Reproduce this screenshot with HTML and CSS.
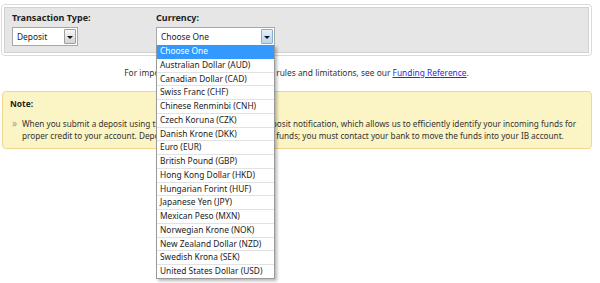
FILE: index.html
```html
<!DOCTYPE html>
<html>
<head>
<meta charset="utf-8">
<link rel="stylesheet" href="styles.css">
</head>
<body>
<div class="page">
  <div class="panel">
    <div class="panel-inner">
      <div class="field field-type">
        <div class="label">Transaction Type:</div>
        <div class="select select-type">
          <span class="value">Deposit</span>
          <span class="btn"><i class="arrow"></i></span>
        </div>
      </div>
      <div class="field field-currency">
        <div class="label">Currency:</div>
        <div class="select select-currency">
          <span class="value">Choose One</span>
          <span class="btn btn-focus"><i class="arrow"></i></span>
          <ul class="options">
            <li class="selected">Choose One</li>
            <li>Australian Dollar (AUD)</li>
            <li>Canadian Dollar (CAD)</li>
            <li>Swiss Franc (CHF)</li>
            <li>Chinese Renminbi (CNH)</li>
            <li>Czech Koruna (CZK)</li>
            <li>Danish Krone (DKK)</li>
            <li>Euro (EUR)</li>
            <li>British Pound (GBP)</li>
            <li>Hong Kong Dollar (HKD)</li>
            <li>Hungarian Forint (HUF)</li>
            <li>Japanese Yen (JPY)</li>
            <li>Mexican Peso (MXN)</li>
            <li>Norwegian Krone (NOK)</li>
            <li>New Zealand Dollar (NZD)</li>
            <li>Swedish Krona (SEK)</li>
            <li>United States Dollar (USD)</li>
          </ul>
        </div>
      </div>
    </div>
  </div>

  <p class="info">For important information concerning rules and limitations, see our <a href="#">Funding Reference</a>.</p>

  <div class="note">
    <div class="note-title">Note:</div>
    <div class="note-item">
      <span class="bullet">»</span>
      <p class="note-text">When you submit a deposit using this form, we'll now create a deposit notification, which allows us to efficiently identify your incoming funds for proper credit to your account. Deposit notices do not transfer any funds; you must contact your bank to move the funds into your IB account.</p>
    </div>
  </div>
</div>
</body>
</html>
```

FILE: styles.css
```css
html, body {
  margin: 0;
  padding: 0;
  background: #ffffff;
}

body {
  min-height: 283px;
  font-family: "Noto Sans", "Open Sans", sans-serif;
  font-size: 8.4px;
  color: #333333;
}

.page {
  width: 591px;
  min-height: 279px;
  padding: 4px 0 0 1px;
}

.panel {
  border: 1px solid #dadada;
  border-radius: 4px;
  padding: 2px;
  background: #ffffff;
}

.panel-inner {
  display: flex;
  background: #e6e6e6;
  border: 1px solid #d2d2d2;
  padding: 4px 7px 6px 7px;
}

.field-type {
  width: 144px;
}

.label {
  font-weight: bold;
  font-size: 9px;
  line-height: 12px;
  color: #222222;
  margin-bottom: 3px;
}

.select {
  position: relative;
  display: flex;
  align-items: center;
  height: 19px;
  box-sizing: border-box;
  background: #ffffff;
  border: 1px solid #a8a8a8;
}

.select-type {
  width: 66px;
}

.select-currency {
  width: 119px;
}

.value {
  flex: 1;
  padding-left: 4px;
  color: #222222;
  line-height: 17px;
}

.btn {
  display: flex;
  align-items: center;
  justify-content: center;
  width: 12px;
  height: 15px;
  margin-right: 1px;
  border: 1px solid #a0a0a0;
  border-radius: 1px;
  background: linear-gradient(#f6f6f6, #d4d4d4);
  box-sizing: border-box;
}

.btn-focus {
  border-color: #8aaed0;
  background: linear-gradient(#e4f0fa, #b9d6ee);
}

.arrow {
  display: block;
  width: 0;
  height: 0;
  border-left: 3px solid transparent;
  border-right: 3px solid transparent;
  border-top: 3px solid #111111;
  margin-top: 1px;
}

.options {
  position: absolute;
  top: 17px;
  left: -1px;
  width: 119px;
  margin: 0;
  padding: 0;
  list-style: none;
  box-sizing: border-box;
  background: #ffffff;
  border: 1px solid #9a9a9a;
  border-top: none;
  box-shadow: 2px 2px 3px rgba(0, 0, 0, 0.28);
  z-index: 5;
}

.options li {
  height: 12.75px;
  line-height: 12.75px;
  padding-left: 3px;
  border-bottom: 1px solid #e2e2e2;
  color: #222222;
  white-space: nowrap;
}

.options li:last-child {
  border-bottom: none;
}

.options li.selected {
  background: #3399ff;
  color: #ffffff;
  border-bottom-color: #3399ff;
}

.info {
  margin: 11px 0 0 0;
  text-align: center;
  line-height: 12px;
  color: #333333;
}

.info a {
  color: #2b2bdd;
  text-decoration: underline;
}

.note {
  margin: 12px 0 0 1px;
  background: #fbf4c4;
  border: 1px solid #f2d68c;
  border-radius: 4px;
  padding: 6px 5px 6px 7px;
  font-size: 8.2px;
}

.note-title {
  font-weight: bold;
  font-size: 8.4px;
  line-height: 12px;
  color: #222222;
  margin-bottom: 8px;
}

.note-item {
  display: flex;
}

.bullet {
  width: 12px;
  padding-left: 2px;
  box-sizing: border-box;
  font-size: 10px;
  color: #a0a0a0;
  line-height: 11px;
}

.note-text {
  flex: 1;
  margin: 0;
  line-height: 12px;
  color: #333333;
}
```
